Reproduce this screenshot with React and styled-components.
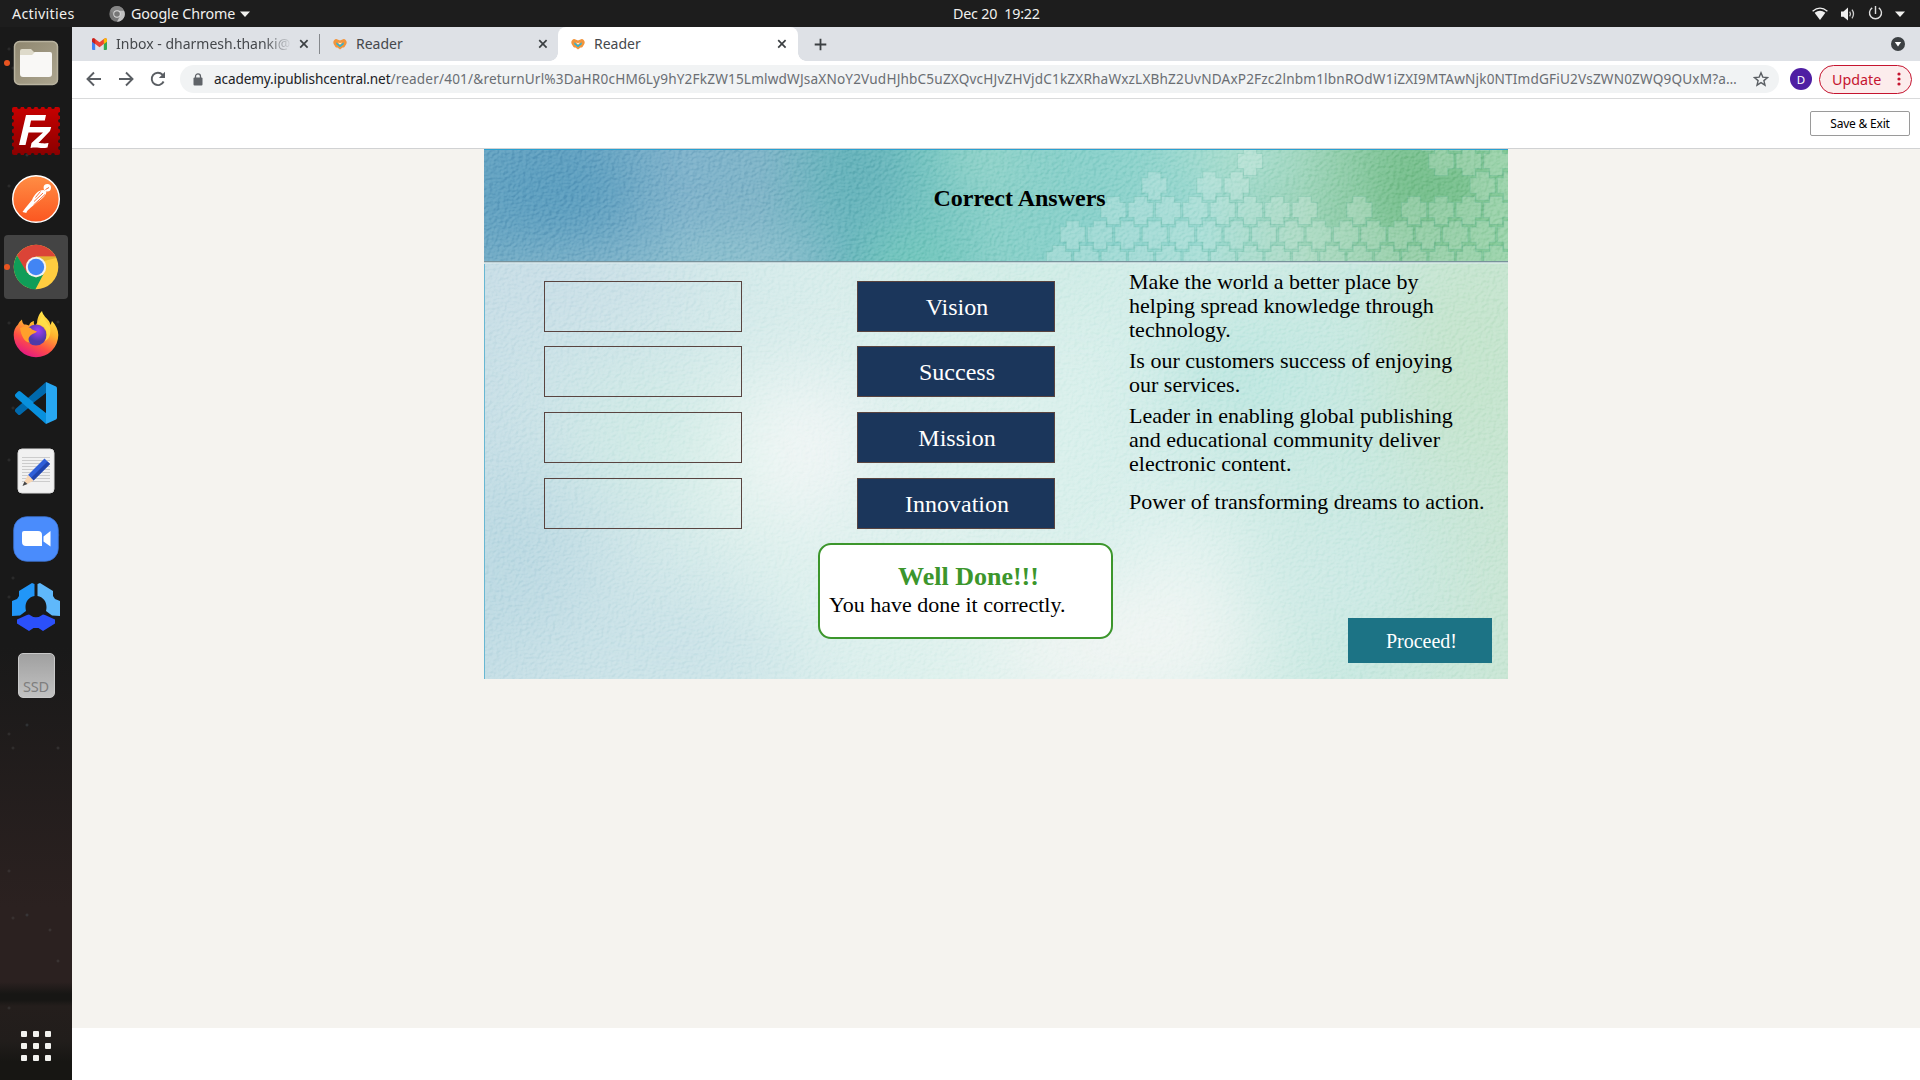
import React from "react";
import styled, { createGlobalStyle } from "styled-components";

const Global = createGlobalStyle`
  * { box-sizing: border-box; }
  body { margin: 0; background: #fff; font-family: "Noto Sans", "Open Sans", sans-serif; overflow: hidden; }
  svg { display: block; flex: none; }
`;

const Desktop = styled.div`
  width: 1920px; height: 1080px; display: flex; flex-direction: column; overflow: hidden;
`;
const TopBar = styled.header`
  height: 27px; flex: none; background: #1d1d1d; color: #f0f0ee;
  display: grid; grid-template-columns: 1fr auto 1fr; align-items: center;
  font-size: 14.3px; line-height: 22px;
`;
const TopLeft = styled.div`display: flex; align-items: center; padding-left: 12px;`;
const Activities = styled.span`width: 97px; letter-spacing: 0.3px;`;
const AppName = styled.span`margin: 0 5px 0 6px; width: 104px; white-space: nowrap; letter-spacing: -0.1px;`;
const Clock = styled.div`white-space: pre; letter-spacing: -0.2px; padding-left: 73px; width: 160px;`;
const TopRight = styled.div`display: flex; align-items: center; justify-content: flex-end; gap: 12px; padding-right: 15px;`;

const Work = styled.div`flex: 1; display: flex; min-height: 0;`;
const Dock = styled.nav`
  width: 72px; flex: none; padding: 4px 4px 0; display: flex; flex-direction: column; gap: 4px;
  background-color: #191919;
  background-image:
    radial-gradient(circle at 13px 41px, #5557 0, #5550 2px),
    radial-gradient(circle at 58px 82px, #5558 0, #5550 2px),
    radial-gradient(circle at 27px 128px, #4a555b99 0, #5550 2px),
    radial-gradient(circle at 50px 183px, #5558 0, #5550 2px),
    radial-gradient(circle at 9px 22px, #5557 0, #5550 2px),
    linear-gradient(180deg, #19191900 0, #19191900 620px, #2b2120 880px, #2b2120 955px, #171614 967px, #171614 973px, #241e1c 979px, #211d1b 1015px, #171613 1035px);
  background-size: 72px 170px, 72px 213px, 72px 190px, 72px 240px, 72px 137px, 100% 100%;
`;
const DockItem = styled.div`
  width: 64px; height: 64px; flex: none; display: flex; align-items: center; justify-content: center; position: relative;
  border-radius: 4px; background: ${p => (p.$active ? "#444444" : "transparent")};
  &::before { content: ""; position: absolute; left: 0; top: 29px; width: 6px; height: 6px; border-radius: 50%;
    background: ${p => (p.$running ? "#e95420" : "transparent")}; }
`;
const AppsGrid = styled.div`
  margin: auto 0 19px 17px; display: grid; grid-template-columns: repeat(3, 6px); gap: 6px;
`;
const AppsDot = styled.i`width: 6px; height: 6px; border-radius: 1px; background: #f2f2ef;`;

const Browser = styled.main`flex: 1; min-width: 0; display: flex; flex-direction: column; background: #fff;`;
const TabStrip = styled.div`height: 34px; flex: none; background: #dee1e6; display: flex; padding-left: 7px;`;
const Tab = styled.div`
  width: ${p => p.$w}px; height: 34px; display: flex; align-items: center; padding: 0 ${p => (p.$active ? 11 : 10)}px 0 13px; color: #45484c;
  font-size: 14px; position: relative; border-radius: 8px 8px 0 0;
  background: ${p => (p.$active ? "#fff" : "transparent")};
  &::before, &::after { content: ""; display: ${p => (p.$active ? "block" : "none")}; position: absolute; bottom: 0; width: 8px; height: 8px; }
  &::before { left: -8px; background: radial-gradient(circle at 0 0, transparent 7.5px, #fff 8px); }
  &::after { right: -8px; background: radial-gradient(circle at 100% 0, transparent 7.5px, #fff 8px); }
`;
const TabTitle = styled.span`
  flex: 1; margin: 0 7px 0 9px; white-space: nowrap; overflow: hidden; line-height: 20px; letter-spacing: ${p => p.$ls || 0}px;
  mask-image: ${p => (p.$fade ? "linear-gradient(90deg,#000 calc(100% - 28px),transparent)" : "none")};
`;
const TabRule = styled.i`width: 1px; height: 20px; margin-top: 7px; background: #85888c;`;
const NewTab = styled.div`display: flex; align-items: center; padding-left: 15.5px;`;
const TabMenu = styled.div`margin: 0 15px 0 auto; display: flex; align-items: center;`;

const Toolbar = styled.div`
  height: 38px; flex: none; display: flex; align-items: center; border-bottom: 1px solid #d9dadb; padding: 0 8px 1px 14px;
`;
const NavIcons = styled.div`display: flex; gap: 16px; margin-right: 14px;`;
const UrlBar = styled.div`
  width: 1599px; height: 28px; border-radius: 14px; background: #f1f3f4; display: flex; align-items: center;
  padding: 0 10px 0 13px; white-space: nowrap; font-size: 13.6px; color: #6a6e73;
`;
const UrlText = styled.div`flex: 1; margin: 0 0 1px 11px; line-height: 20px; letter-spacing: 0.17px; overflow: hidden;`;
const Host = styled.span`color: #202124; letter-spacing: -0.12px;`;
const Avatar = styled.div`
  width: 22px; height: 22px; margin: 0 7px 0 11px; border-radius: 50%; background: #4f1fa3; color: #fff;
  font-size: 11.5px; display: flex; align-items: center; justify-content: center; flex: none;
`;
const Update = styled.div`
  width: 93px; height: 29px; flex: none; border: 1px solid #c5142f; border-radius: 15px; background: #fcecec; color: #c5142f;
  display: flex; align-items: center; justify-content: space-between; padding: 0 10.5px 0 12px; font-size: 14.3px;
`;

const ReaderBar = styled.div`
  height: 50px; flex: none; border-bottom: 1px solid #d1d2d3; display: flex; justify-content: flex-end; align-items: center; padding-right: 10px;
`;
const SaveExit = styled.button`
  width: 100px; height: 25px; background: #fff; border: 1px solid #9a9a9a; border-radius: 2px; color: #000;
  padding: 0; font: 12px/20px "Noto Sans", sans-serif; letter-spacing: -0.2px;
`;
const Stage = styled.section`height: 879px; flex: none; background: #f5f3ef; padding-left: 412px;`;
const Slide = styled.article`
  width: 1024px; height: 530px; position: relative; isolation: isolate; overflow: hidden;
  font-family: "Liberation Serif", "Times New Roman", serif; color: #000;
`;
const Art = styled.svg`position: absolute; inset: 0; z-index: -1;`;
const PaperGrain = styled.rect`mix-blend-mode: soft-light;`;
const SlideTitle = styled.h1`
  margin: 0; height: 112px; padding: 35px 0 0 449.5px; font-size: 24px; line-height: 28px; font-weight: bold;
`;
const Columns = styled.div`display: flex; padding-left: 60px; height: 282px;`;
const Column = styled.div`display: flex; flex-direction: column; padding-top: 20px; margin-right: ${p => p.$mr}px;`;
const Slot = styled.div`
  width: 198px; height: 51px; border: 1px solid #594440; margin-bottom: ${p => p.$mb}px;
  background: ${p => (p.$filled ? "#1b365b" : "transparent")}; color: #fff;
  display: flex; align-items: center; justify-content: center; padding: 0 0 0 2px; font-size: 24px; line-height: 28px;
`;
const Meanings = styled.div`padding-top: 9px; font-size: 22px; line-height: 24px;`;
const Meaning = styled.p`margin: 0 0 ${p => p.$mb}px; white-space: pre;`;
const Footer = styled.div`display: flex; padding-left: 334px;`;
const Feedback = styled.div`
  width: 295px; height: 96px; border: 2px solid #3c962c; border-radius: 13px; background: #fff; padding: 17px 9px 0;
`;
const FeedbackTitle = styled.h2`margin: 0 0 0 6px; text-align: center; color: #3c962c; font-size: 26px; line-height: 30px; font-weight: bold;`;
const FeedbackText = styled.p`margin: 1px 0 0; font-size: 22px; line-height: 24px;`;
const Proceed = styled.button`
  width: 144px; height: 45px; margin: 75px 0 0 235px; border: 0; background: #1c7385; color: #fff;
  font: 20px/24px "Liberation Serif", "Times New Roman", serif; padding: 0 0 0 3px;
`;

const Caret = () => <svg width="10" height="6" viewBox="0 0 10 6"><path d="M0 .5h10L5 6z" fill="#f0f0ee" /></svg>;
const GrayChrome = () => (
  <svg width="16" height="16" viewBox="0 0 16 16"><circle cx="8" cy="8" r="7.7" fill="#777" /><path d="M8 4.4h7A7.7 7.7 0 0 1 8 15.7l3.2-6z" fill="#c2c2c2" /><path d="M1.2 4.3A7.7 7.7 0 0 1 15 4.5H8L5 9.8z" fill="#858585" /><circle cx="8" cy="8" r="3.7" fill="#ddd" /><circle cx="8" cy="8" r="2.8" fill="#777" /></svg>
);
const Wifi = () => <svg width="16" height="14" viewBox="0 0 16 14"><path d="M.6 4.2Q8-2 15.4 4.2" fill="none" stroke="#eee" strokeWidth="1.3" /><path d="M2.6 5.8Q8 1.8 13.4 5.8L8 13z" fill="#eee" /></svg>;
const Volume = () => <svg width="16" height="14" viewBox="0 0 16 14"><path d="M1 4.5h2.5L8 .5v13L3.5 9.8H1z" fill="#eee" /><path d="M9.7 4.7q1.6 2.3 0 4.6M12 2.7q3 4.3 0 8.6" stroke="#ccc" strokeWidth="1.3" fill="none" /></svg>;
const Power = () => <svg width="15" height="15" viewBox="0 0 15 15"><path d="M7.5 0v8M4.2 1.8a6 6 0 1 0 6.6 0" stroke="#ddd" strokeWidth="1.4" fill="none" /></svg>;

const Gmail = () => (
  <svg width="15" height="12" viewBox="0 0 15 12"><path d="M0 2.5h3.2V12H1a1 1 0 0 1-1-1z" fill="#4285f4" /><path d="M11.8 2.5H15V11a1 1 0 0 1-1 1h-2.2z" fill="#34a853" /><path d="M0 1.8C0 .2 1.7-.4 3.2.9l4.3 3.4L11.8.9C13.3-.4 15 .2 15 1.8v1.7L7.5 9.2 0 3.5z" fill="#ea4335" /><path d="M11.8.9C13.3-.4 15 .2 15 1.8v2L11.8 6z" fill="#fbbc04" /><path d="M0 1.8v2L3.2 6V.9C1.7-.4 0 .2 0 1.8z" fill="#c5221f" /></svg>
);
const HeartIcon = () => (
  <svg width="14" height="12" viewBox="0 0 14 12"><path d="M3.3.9C.9 1.1-.5 3.900.8 6.200L2.500 8.900q.8.800 1.900.500L7 11.400l2.600-2q1.100.300 1.900-.5L13.200 6.200C14.500 3.900 13.100 1.100 10.700.9L7 2.600z" fill="#f2953c" /><path d="M3.300 4.200 7 7.200l3.700-3v2L7 9.200 3.300 6.200z" fill="#27b4d8" /><path d="M5.600 4.200 7 5.400l1.400-1.200v1L7 6.500 5.600 5.200z" fill="#fff" /></svg>
);
const Close = () => <svg width="10" height="10" viewBox="0 0 10 10"><path d="m1.2 1.2 7.4 7.4m0-7.4L1.2 8.6" stroke="#3c4043" strokeWidth="1.7" /></svg>;
const Plus = () => <svg width="13" height="13" viewBox="0 0 13 13"><path d="M6.5.7v11.6M.7 6.5h11.6" stroke="#3c4043" strokeWidth="1.8" /></svg>;
const TabSearch = () => <svg width="14" height="14" viewBox="0 0 14 14"><circle cx="7" cy="7" r="7" fill="#3c4043" /><path d="M3.8 5h6.4L7 9.5z" fill="#fff" /></svg>;
const Arrow = ({ flip }) => <svg width="16" height="16" viewBox="0 0 16 16"><path d={flip ? "M1 8h13M8 1.5 14.5 8 8 14.5" : "M15 8H2M8 1.5 1.5 8 8 14.5"} stroke="#5a5e63" strokeWidth="1.9" fill="none" /></svg>;
const Reload = () => <svg width="16" height="16" viewBox="0 0 16 16"><path d="M13.6 10.5A6.2 6.2 0 1 1 12.5 3.7L14 5.4" stroke="#5a5e63" strokeWidth="1.9" fill="none" /><path d="M15 .8V7H8.8z" fill="#5a5e63" /></svg>;
const Lock = () => <svg width="10" height="13" viewBox="0 0 10 13"><rect x=".5" y="4.5" width="9" height="8" rx="1" fill="#5f6368" /><path d="M2.5 5V3.4a2.5 2.5 0 0 1 5 0V5" stroke="#5f6368" strokeWidth="1.3" fill="none" /></svg>;
const Star = () => <svg width="16" height="16" viewBox="0 0 16 16"><path d="m8 1.8 1.8 4.3 4.7.4-3.6 3.1 1.1 4.6L8 11.7l-4 2.5 1.1-4.6-3.6-3.1 4.7-.4z" stroke="#5a5e63" strokeWidth="1.4" fill="none" /></svg>;
const Dots = () => <svg width="4" height="14" viewBox="0 0 4 14"><circle cx="2" cy="2" r="1.6" fill="#c5142f" /><circle cx="2" cy="7" r="1.6" fill="#c5142f" /><circle cx="2" cy="12" r="1.6" fill="#c5142f" /></svg>;

const Files = () => (
  <svg width="46" height="46" viewBox="0 0 46 46"><defs><linearGradient id="fi" x2="1" y2="1"><stop offset="0" stopColor="#8f8770" /><stop offset="1" stopColor="#aca58f" /></linearGradient></defs>
    <rect x="1.5" y="1.5" width="43" height="43" rx="5" fill="url(#fi)" stroke="#b9b39f" strokeWidth="1.5" /><path d="M7 11a2 2 0 0 1 2-2h9l3 3h15v6H7z" fill="#dedaca" /><path d="M7 15h12l3-3h15a2 2 0 0 1 2 2v20a3 3 0 0 1-3 3H10a3 3 0 0 1-3-3z" fill="#f9f8f6" /></svg>
);
const notches = [...Array(6)].flatMap((_, i) => [[7 + i * 6.8, 0], [7 + i * 6.8, 48], [0, 7 + i * 6.8], [48, 7 + i * 6.8]]);
const FileZilla = () => (
  <svg width="48" height="48" viewBox="0 0 48 48"><defs><linearGradient id="fz" x2="0" y2="1"><stop offset="0" stopColor="#c70000" /><stop offset="1" stopColor="#8a0000" /></linearGradient><mask id="fzm"><rect width="48" height="48" fill="#fff" />{notches.map(([x, y], i) => <circle key={i} cx={x} cy={y} r="1.9" fill="#000" />)}</mask></defs>
    <rect width="48" height="48" rx="2" fill="url(#fz)" mask="url(#fzm)" />
    <path d="M14 8h20l-1.2 5.5H19L17.7 20h21.5L38 24 26.5 36c3 0 5.500 1 10 0l-1 4.500c-7 1.500-10-1-17 .5l1-5L31 25.500H16.500L13.500 38H7z" fill="#fff" /></svg>
);
const Postman = () => (
  <svg width="48" height="48" viewBox="0 0 48 48"><defs><linearGradient id="pm" x2="0" y2="1"><stop offset="0" stopColor="#ff8e45" /><stop offset="1" stopColor="#fb5620" /></linearGradient></defs>
    <circle cx="24" cy="24" r="23.3" fill="url(#pm)" stroke="#fff" strokeWidth="1.4" />
    <circle cx="35.300" cy="12.800" r="3.700" fill="#fff" /><path d="M33.500 14.500 37 12.500" stroke="#f96a32" strokeWidth="1" />
    <path d="M31.500 15c-5 0-9 4-11.500 10l-7 8.500-2.500 3.500 4 1c-.5-1.500 4-5.500 10-10 5-4 9-6 10-11.500z" fill="#fff" /><path d="m31 18-9 8.500M33 19.500 21.500 30M28.500 16.500l-5 6" stroke="#fa713a" strokeWidth="1" /></svg>
);
const Chrome = () => (
  <svg width="46" height="46" viewBox="0 0 46 46"><circle cx="23" cy="23" r="22.300" fill="#ffcd40" /><path d="M4 11.500A22.300 22.300 0 0 1 42.600 12.500H23L13 29z" fill="#db4437" /><path d="M4 11.500 13.900 28.500 23 33.500 30.500 30 22.500 45.300A22.300 22.300 0 0 1 4 11.500z" fill="#0f9d58" /><path d="M23 12.500h19.600l.5 1.500L31 17z" fill="#c79a25" opacity=".5" /><circle cx="23" cy="23" r="10.200" fill="#f1f1f1" /><circle cx="23" cy="23" r="8.200" fill="#4285f4" /></svg>
);
const Firefox = () => (
  <svg width="46" height="48" viewBox="0 0 46 48"><defs><linearGradient id="ff" x1=".8" x2=".3" y2="1"><stop offset="0" stopColor="#fff44f" /><stop offset=".4" stopColor="#ffb02e" /><stop offset=".7" stopColor="#ff4f45" /><stop offset="1" stopColor="#e31587" /></linearGradient><radialGradient id="fp" cx=".6" cy=".3"><stop offset="0" stopColor="#a13df5" /><stop offset="1" stopColor="#4f3aa7" /></radialGradient></defs>
    <path d="M9 8.500c0 2 1 4 2 5 2 0 4 .5 5 1 1-3 3-4 5-4.500-.5 2 0 3.500 1 5L24 12c.5-6 2.500-9.500 5-12 1 5 5 7 7.500 11l1 3 1.500-4c4 4 6.300 9 6.300 14A22.300 22.300 0 0 1 .7 24C.7 20 2 16 5 13.500c1-2 2-3.500 4-5z" fill="url(#ff)" />
    <circle cx="23" cy="24" r="10.500" fill="url(#fp)" /><path d="M7 17c4-2 10-2 12 1.500l5 2c-1 2-4 1.500-6 3.500-3 2.500-3 5-1 8-6-1-9-8-10-15z" fill="#ffa02b" /><path d="M24 13c9 1 12 9 8 17 5-2 6-8 5-14L29 5z" fill="#ffe24b" opacity=".8" /></svg>
);
const Code = () => (
  <svg width="44" height="44" viewBox="0 0 44 44"><path d="M2 27.500 32 1l.5 11L6.500 33.500c-1 1-2 .5-2.500 0L1.500 31c-1-1-.5-2.500.5-3.500z" fill="#0069ad" /><path d="M2 16.500 32 43l.5-11L6.500 10.500c-1-1-2-.5-2.500 0L1.500 13c-1 1-.5 2.500.5 3.500z" fill="#0890dd" /><path d="M32 1l10 4.500q1 .5 1 2v29q0 1.500-1 2L32 43z" fill="#27a7f2" /><path d="M32 12v20L19 22z" fill="#191919" /></svg>
);
const Editor = () => (
  <svg width="38" height="46" viewBox="0 0 38 46"><rect x="1" y="1" width="36" height="44" rx="4" fill="#f1f1f1" stroke="#ddd" strokeWidth="1" /><path d="M5 9.500h28M5 12.500h28M5 15.500h28M5 18.500h28M5 21.500h28M5 24.500h28M5 27.500h28M5 30.500h28M5 33.500h28" stroke="#ccc" strokeWidth="1" /><path d="M11 27 27.500 10.500l5.500 5.500L16.500 32.500z" fill="#2f5fd8" /><path d="m14 30 16.500-16.500L33 16 16.500 32.500z" fill="#2145ac" /><path d="m11 27 5.500 5.500-6 3.500-3-2.500z" fill="#f8d6b3" /><path d="m7.500 33.500-2 4.500 5-2z" fill="#444" /></svg>
);
const Zoom = () => (
  <svg width="46" height="46" viewBox="0 0 46 46"><rect x=".7" y=".7" width="44.600" height="44.600" rx="13" fill="#4a8cfc" stroke="#3d73d2" strokeWidth=".8" /><path d="M9 17a2 2 0 0 1 2-2h14q4 0 4 4v11H13q-4 0-4-4zM30.500 20.500l7-5.500v15.500l-7-5z" fill="#fff" /></svg>
);
const Segments = () => (
  <svg width="48" height="48" viewBox="0 0 48 48"><path d="m20 0 2.500 1v12C17 14 13.500 18.500 13.500 24q0 2 .5 4l-6 4.500-8 .5V18l5-2 2-3V8z" fill="#2196f8" /><path d="m28 0-2.500 1v12C31 14 34.500 18.500 34.500 24q0 2-.5 4l6 4.500 8 .5V18l-5-2-2-3V8z" fill="#5fb8fb" /><path d="m5 36.500 10-4.500 2-.5q7 5.500 14 0l2 .5 10 4.500v4L31 48l-4.500-3h-5L17 48 5 40.500z" fill="#2b50fa" /></svg>
);
const SsdLabel = styled.div`
  width: 37px; height: 45px; border-radius: 5px; border: 1px solid #c9c9c9; background: linear-gradient(#a0a0a0, #c2c2c2);
  display: flex; align-items: flex-end; justify-content: center; color: #7e7e7e; font-size: 14.5px; line-height: 20px; padding-bottom: 1px; letter-spacing: -0.2px;
`;

const headerTiles = [
  [-1, [1284, 1366, 1448]],
  [0, [750, 1324, 1406, 1488]],
  [1, [463, 628, 710, 1448, 1530]],
  [2, [340, 422, 504, 586, 668, 750, 832, 914, 1078, 1242, 1324, 1406, 1488]],
  [3, [...Array(17)].map((_, i) => 218 + i * 82)],
  [4, [...Array(17)].map((_, i) => 177 + i * 82)],
];
const SlideArt = () => (
  <Art width="1024" height="530" viewBox="0 0 1024 530">
    <defs>
      <linearGradient id="hd"><stop offset="0" stopColor="#68a5c3" /><stop offset=".08" stopColor="#65a3c2" /><stop offset=".2" stopColor="#80b3cb" /><stop offset=".27" stopColor="#80b5c8" /><stop offset=".36" stopColor="#6bb7be" /><stop offset=".43" stopColor="#76c4c1" /><stop offset=".5" stopColor="#8ad0c9" /><stop offset=".6" stopColor="#8bd1cb" /><stop offset=".7" stopColor="#98d7cf" /><stop offset=".8" stopColor="#9cd3b8" /><stop offset=".9" stopColor="#82c598" /><stop offset="1" stopColor="#86ca99" /></linearGradient>
      <linearGradient id="bd"><stop offset="0" stopColor="#c9e0e7" /><stop offset=".2" stopColor="#d3e9ea" /><stop offset=".45" stopColor="#def1ed" /><stop offset=".65" stopColor="#d7efeb" /><stop offset=".85" stopColor="#c9e9e1" /><stop offset="1" stopColor="#cae6d5" /></linearGradient>
      <filter id="soft" x="-100%" y="-100%" width="300%" height="300%" colorInterpolationFilters="sRGB"><feGaussianBlur stdDeviation="40" /></filter>
      <filter id="softer" x="-100%" y="-150%" width="300%" height="400%" colorInterpolationFilters="sRGB"><feGaussianBlur stdDeviation="26" /></filter>
      <filter id="paper" x="0" y="0" width="100%" height="100%" colorInterpolationFilters="sRGB">
        <feTurbulence type="fractalNoise" baseFrequency=".27 .33" numOctaves="2" seed="4" />
        <feDiffuseLighting surfaceScale="1.6" lightingColor="#fff"><feDistantLight azimuth="225" elevation="52" /></feDiffuseLighting>
        <feComponentTransfer><feFuncR type="linear" slope="1.6" intercept="-.72" /><feFuncG type="linear" slope="1.6" intercept="-.72" /><feFuncB type="linear" slope="1.6" intercept="-.72" /></feComponentTransfer>
      </filter>
      <clipPath id="hc"><rect width="1024" height="113" /></clipPath><clipPath id="bc"><rect y="113" width="1024" height="417" /></clipPath>
    </defs>
    <rect width="1024" height="113" fill="url(#hd)" />
    <g clipPath="url(#hc)">
      <g filter="url(#softer)"><ellipse cx="110" cy="130" rx="150" ry="24" fill="#86b8cb" /><ellipse cx="250" cy="118" rx="90" ry="28" fill="#90c3cf" /><ellipse cx="70" cy="40" rx="70" ry="35" fill="#5c9ebf" /><ellipse cx="375" cy="25" rx="35" ry="35" fill="#66b2ba" /><ellipse cx="430" cy="120" rx="50" ry="22" fill="#74cbbb" /><ellipse cx="500" cy="5" rx="30" ry="25" fill="#9ad6cb" /><ellipse cx="760" cy="5" rx="60" ry="26" fill="#b0dfd0" /><ellipse cx="945" cy="38" rx="50" ry="35" fill="#74bd8a" /></g>
      <g fill="#fff" fillOpacity=".2" stroke="#3fa08a" strokeOpacity=".16" strokeWidth="1.2">
        {headerTiles.flatMap(([r, xs]) => xs.map(x => {
          const cx = 516 + x / 3, cy = 12.5 + r * 24.5;
          return <path key={r + "-" + x} d={`M${cx - 6.5} ${cy - 14}h13v6h6v15h-6v7h-13v-7h-6v-15h6z`} />;
        }))}
      </g>
    </g>
    <g clipPath="url(#bc)">
      <rect y="113" width="1024" height="417" fill="url(#bd)" />
      <g filter="url(#soft)">
        <ellipse cx="70" cy="130" rx="140" ry="28" fill="#c8dce6" /><ellipse cx="20" cy="420" rx="80" ry="100" fill="#bcd9e2" /><ellipse cx="180" cy="500" rx="150" ry="45" fill="#c9e1e7" />
        <ellipse cx="270" cy="310" rx="85" ry="90" fill="#dff1ec" /><ellipse cx="150" cy="285" rx="65" ry="60" fill="#cfeae5" /><ellipse cx="325" cy="300" rx="60" ry="75" fill="#f2f6f6" />
        <ellipse cx="640" cy="500" rx="140" ry="60" fill="#f1f5f3" /><ellipse cx="700" cy="410" rx="60" ry="40" fill="#e9f4f2" /><ellipse cx="390" cy="450" rx="130" ry="60" fill="#dff1ee" /><ellipse cx="760" cy="230" rx="80" ry="60" fill="#bde6e0" />
        <ellipse cx="990" cy="200" rx="65" ry="130" fill="#c5e4cd" /><ellipse cx="540" cy="120" rx="140" ry="25" fill="#c6e8e1" /><ellipse cx="850" cy="430" rx="80" ry="60" fill="#cfeae6" />
      </g>
    </g>
    <PaperGrain width="1024" height="530" filter="url(#paper)" opacity=".22" />
    <rect width="1024" height="1" fill="#2aa0d0" /><rect y="112" width="1024" height="1.5" fill="#78929b" /><rect y="113.5" width="1024" height="1" fill="#e2eef0" /><rect y="115" width="1" height="415" fill="#68b7d2" />
  </Art>
);

const dockItems = [
  { icon: <Files />, running: true }, { icon: <FileZilla /> }, { icon: <Postman /> }, { icon: <Chrome />, running: true, active: true },
  { icon: <Firefox /> }, { icon: <Code /> }, { icon: <Editor /> }, { icon: <Zoom /> }, { icon: <Segments /> }, { icon: <SsdLabel>SSD</SsdLabel> },
];
const answers = [["Vision", 14], ["Success", 15], ["Mission", 15], ["Innovation", 0]];
const meanings = [
  ["Make the world a better place by\nhelping spread knowledge through\ntechnology.", 7],
  ["Is our customers success of enjoying\nour services.", 7],
  ["Leader in enabling global publishing\nand educational community deliver\nelectronic content.", 14],
  ["Power of transforming dreams to action.", 0],
];

export default function App() {
  return (
    <Desktop>
      <Global />
      <TopBar>
        <TopLeft><Activities>Activities</Activities><GrayChrome /><AppName>Google Chrome</AppName><Caret /></TopLeft>
        <Clock>Dec 20  19:22</Clock>
        <TopRight><Wifi /><Volume /><Power /><Caret /></TopRight>
      </TopBar>
      <Work>
        <Dock>
          {dockItems.map((d, i) => <DockItem key={i} $running={d.running} $active={d.active}>{d.icon}</DockItem>)}
          <AppsGrid>{[...Array(9)].map((_, i) => <AppsDot key={i} />)}</AppsGrid>
        </Dock>
        <Browser>
          <TabStrip>
            <Tab $w={240}><Gmail /><TabTitle $fade $ls={0}>Inbox - dharmesh.thanki@</TabTitle><Close /></Tab>
            <TabRule />
            <Tab $w={238}><HeartIcon /><TabTitle>Reader</TabTitle><Close /></Tab>
            <Tab $w={240} $active><HeartIcon /><TabTitle>Reader</TabTitle><Close /></Tab>
            <NewTab><Plus /></NewTab>
            <TabMenu><TabSearch /></TabMenu>
          </TabStrip>
          <Toolbar>
            <NavIcons><Arrow /><Arrow flip /><Reload /></NavIcons>
            <UrlBar>
              <Lock />
              <UrlText><Host>academy.ipublishcentral.net</Host>/reader/401/&amp;returnUrl%3DaHR0cHM6Ly9hY2FkZW15LmlwdWJsaXNoY2VudHJhbC5uZXQvcHJvZHVjdC1kZXRhaWxzLXBhZ2UvNDAxP2Fzc2lnbm1lbnROdW1iZXI9MTAwNjk0NTImdGFiU2VsZWN0ZWQ9QUxM?a…</UrlText>
              <Star />
            </UrlBar>
            <Avatar>D</Avatar>
            <Update>Update<Dots /></Update>
          </Toolbar>
          <ReaderBar><SaveExit>Save &amp; Exit</SaveExit></ReaderBar>
          <Stage>
            <Slide>
              <SlideArt />
              <SlideTitle>Correct Answers</SlideTitle>
              <Columns>
                <Column $mr={115}>{answers.map(([a, mb]) => <Slot key={a} $mb={mb} />)}</Column>
                <Column $mr={74}>{answers.map(([a, mb]) => <Slot key={a} $mb={mb} $filled>{a}</Slot>)}</Column>
                <Meanings>{meanings.map(([m, mb]) => <Meaning key={m} $mb={mb}>{m}</Meaning>)}</Meanings>
              </Columns>
              <Footer>
                <Feedback><FeedbackTitle>Well Done!!!</FeedbackTitle><FeedbackText>You have done it correctly.</FeedbackText></Feedback>
                <Proceed>Proceed!</Proceed>
              </Footer>
            </Slide>
          </Stage>
        </Browser>
      </Work>
    </Desktop>
  );
}
